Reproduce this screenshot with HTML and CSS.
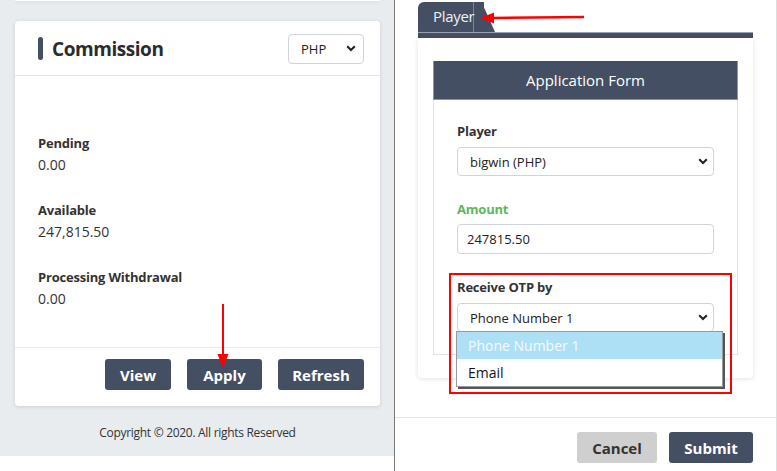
FILE: index.html
```html
<!DOCTYPE html>
<html>
<head>
<meta charset="utf-8">
<link rel="stylesheet" href="styles.css">
</head>
<body>
<div class="page">
  <div class="left">
    <div class="gray">
      <div class="prev-card"></div>
      <div class="card">
        <div class="card-head">
          <div class="title"><span class="bar"></span>Commission</div>
          <div class="sel sel-sm">PHP<svg class="chev" width="10" height="7" viewBox="0 0 10 7"><path d="M1.2 1.2 L5 5 L8.8 1.2" fill="none" stroke="#222" stroke-width="2"/></svg></div>
        </div>
        <div class="card-body">
          <div class="lbl">Pending</div>
          <div class="val">0.00</div>
          <div class="lbl">Available</div>
          <div class="val">247,815.50</div>
          <div class="lbl">Processing Withdrawal</div>
          <div class="val last">0.00</div>
        </div>
        <div class="card-foot">
          <button class="btn btn-dark w-view">View</button>
          <button class="btn btn-dark w-apply">Apply</button>
          <button class="btn btn-dark w-refresh">Refresh</button>
        </div>
        <svg class="arrow-down" width="14" height="66" viewBox="0 0 14 66"><line x1="7" y1="0" x2="7" y2="52" stroke="#f00" stroke-width="2"/><path d="M1.5 50 L12.5 50 L7 64 Z" fill="#f00"/></svg>
      </div>
      <div class="copy">Copyright © 2020. All rights Reserved</div>
    </div>
  </div>
  <div class="right">
    <div class="tabs">
      <div class="tab"><span class="tab-text">Player</span></div>
      <svg class="arrow-left" width="104" height="14" viewBox="0 0 104 14"><line x1="10" y1="7" x2="104" y2="6" stroke="#f00" stroke-width="2.4"/><path d="M0 7 L14 1.5 L14 12.5 Z" fill="#f00"/></svg>
    </div>
    <div class="tab-line"></div>
    <div class="rcard">
      <div class="form">
        <div class="form-head">Application Form</div>
        <div class="form-body">
          <div class="flbl">Player</div>
          <div class="sel sel-lg">bigwin (PHP)<svg class="chev" width="10" height="7" viewBox="0 0 10 7"><path d="M1.2 1.2 L5 5 L8.8 1.2" fill="none" stroke="#222" stroke-width="2"/></svg></div>
          <div class="flbl green">Amount</div>
          <div class="inp">247815.50</div>
          <div class="flbl">Receive OTP by</div>
          <div class="sel sel-lg last">Phone Number 1<svg class="chev" width="10" height="7" viewBox="0 0 10 7"><path d="M1.2 1.2 L5 5 L8.8 1.2" fill="none" stroke="#222" stroke-width="2"/></svg></div>
          <div class="redbox"></div>
          <div class="dropdown">
            <div class="opt opt-on">Phone Number 1</div>
            <div class="opt">Email</div>
          </div>
        </div>
      </div>
    </div>
    <div class="rfoot">
      <button class="btn btn-gray w-cancel">Cancel</button>
      <button class="btn btn-dark w-submit">Submit</button>
    </div>
  </div>
</div>
</body>
</html>
```

FILE: styles.css
```css
* { box-sizing: border-box; }
html, body { margin: 0; padding: 0; background: #fff; }
body {
  font-family: "Open Sans", "Noto Sans", sans-serif;
  color: #333;
  width: 777px;
  height: 471px;
  overflow: hidden;
}
.page { display: flex; height: 471px; }

.left {
  width: 395px;
  border-right: 1px solid #777;
  flex: none;
}
.gray {
  background: #e9ecef;
  height: 456px;
  padding: 0 14px 0 15px;
  display: flex;
  flex-direction: column;
}
.prev-card {
  height: 1px;
  background: #fff;
  border-radius: 0 0 4px 4px;
  box-shadow: 0 1px 4px rgba(0,0,0,0.14);
}
.card {
  position: relative;
  margin-top: 20px;
  background: #fff;
  border-radius: 4px;
  box-shadow: 0 1px 4px rgba(0,0,0,0.12);
}
.card-head {
  height: 55px;
  border-bottom: 1px solid #e3e5e8;
  display: flex;
  align-items: center;
  justify-content: space-between;
  padding: 1px 16px 0 23px;
}
.title {
  display: flex;
  align-items: center;
  font-weight: 700;
  font-size: 19px;
  color: #2b2b2b;
  letter-spacing: -0.45px;
}
.bar {
  width: 5px;
  height: 23px;
  border-radius: 3px;
  background: #454f63;
  margin-right: 9px;
}
.sel {
  display: flex;
  align-items: center;
  justify-content: space-between;
  background: #fff;
  border: 1px solid #ced4da;
  border-radius: 4px;
  color: #222;
}
.sel-sm {
  width: 76px;
  height: 30px;
  font-size: 13px;
  padding: 0 7px 0 12px;
}
.chev { display: block; }

.card-body {
  padding: 57px 23px 37px;
}
.lbl {
  font-size: 13px;
  font-weight: 700;
  line-height: 20px;
  color: #333;
  letter-spacing: -0.2px;
}
.val {
  font-size: 14px;
  line-height: 22px;
  margin-top: 1px;
  margin-bottom: 24px;
  color: #333;
}
.val.last { margin-bottom: 0; }
.card-foot {
  border-top: 1px solid #e9ecef;
  padding: 11px 16px 16px;
  display: flex;
  justify-content: flex-end;
  gap: 16px;
}
.btn {
  border: 0;
  border-radius: 3px;
  height: 31px;
  font-family: inherit;
  font-weight: 700;
  font-size: 15px;
  color: #fff;
  padding: 0;
}
.btn-dark { background: #454f63; color: #fff; }
.btn-gray { background: #cfcfcf; color: #333; }
.w-view { width: 66px; }
.w-apply { width: 75px; }
.w-refresh { width: 86px; }
.w-cancel { width: 80px; }
.w-submit { width: 84px; }

.arrow-down {
  position: absolute;
  left: 201px;
  top: 283px;
}
.copy {
  text-align: center;
  font-size: 12px;
  letter-spacing: -0.3px;
  margin-top: 18px;
  color: #333;
}

.right {
  flex: 1;
  border-right: 1px solid #ddd;
  position: relative;
}
.tabs {
  position: relative;
  padding: 2px 0 0 23px;
  height: 32px;
}
.tab {
  position: relative;
  width: 66px;
  height: 30px;
  background: #454f63;
  border-top-left-radius: 6px;
}
.tab::after {
  content: "";
  position: absolute;
  right: -11px;
  top: 0;
  width: 22px;
  height: 30px;
  background: #454f63;
  border-top-right-radius: 7px;
  transform: skewX(24deg);
  transform-origin: bottom left;
}
.tab-text {
  position: relative;
  z-index: 1;
  display: block;
  width: 56px;
  height: 30px;
  line-height: 29px;
  padding-left: 15px;
  border-right: 1px solid #7c8496;
  color: #eef0f3;
  font-size: 15px;
  letter-spacing: -0.3px;
}
.arrow-left {
  position: absolute;
  left: 85px;
  top: 11px;
}
.tab-line {
  margin: 0 23px;
  height: 6px;
  background: #454f63;
  border-top: 1px solid #9aa1ae;
}
.rcard {
  margin: 0 23px;
  background: #fff;
  padding: 23px 15px;
  border-radius: 0 0 4px 4px;
  box-shadow: 0 1px 5px rgba(0,0,0,0.12);
}
.form { border: 1px solid #e1e3e6; border-top: 0; }
.form-head {
  background: #454f63;
  color: #fff;
  height: 39px;
  line-height: 38px;
  text-align: center;
  font-size: 15px;
  margin: 0 -1px;
  border: 1px solid #8d94a3;
  border-top: 0;
}
.form-body {
  position: relative;
  padding: 21px 23px 22px 23px;
}
.flbl {
  font-size: 13px;
  font-weight: 700;
  line-height: 20px;
  margin-bottom: 6px;
  color: #333;
  letter-spacing: -0.2px;
}
.flbl.green { color: #5cb85c; margin-bottom: 5px; }
.sel-lg {
  width: 257px;
  height: 29px;
  font-size: 13px;
  padding: 0 5px 0 12px;
  margin-bottom: 23px;
}
.sel-lg.last { margin-bottom: 0; }
.inp {
  width: 257px;
  height: 30px;
  border: 1px solid #ced4da;
  border-radius: 4px;
  font-size: 13px;
  line-height: 28px;
  padding-left: 9px;
  margin-bottom: 23px;
  color: #222;
}
.redbox {
  position: absolute;
  left: 15px;
  top: 173px;
  width: 283px;
  height: 121px;
  border: 2px solid #f00;
}
.dropdown {
  position: absolute;
  left: 22px;
  top: 231px;
  width: 267px;
  background: #fff;
  border: 1px solid #999;
  box-shadow: 2px 2px 0 #555;
}
.opt {
  height: 27px;
  line-height: 27px;
  padding-left: 11px;
  font-size: 14px;
  color: #111;
}
.opt-on { background: #ade0f5; color: #f4faff; }

.rfoot {
  margin-top: 39px;
  border-top: 1px solid #e3e5e8;
  padding: 14px 23px 0 0;
  display: flex;
  justify-content: flex-end;
  gap: 12px;
}
```
